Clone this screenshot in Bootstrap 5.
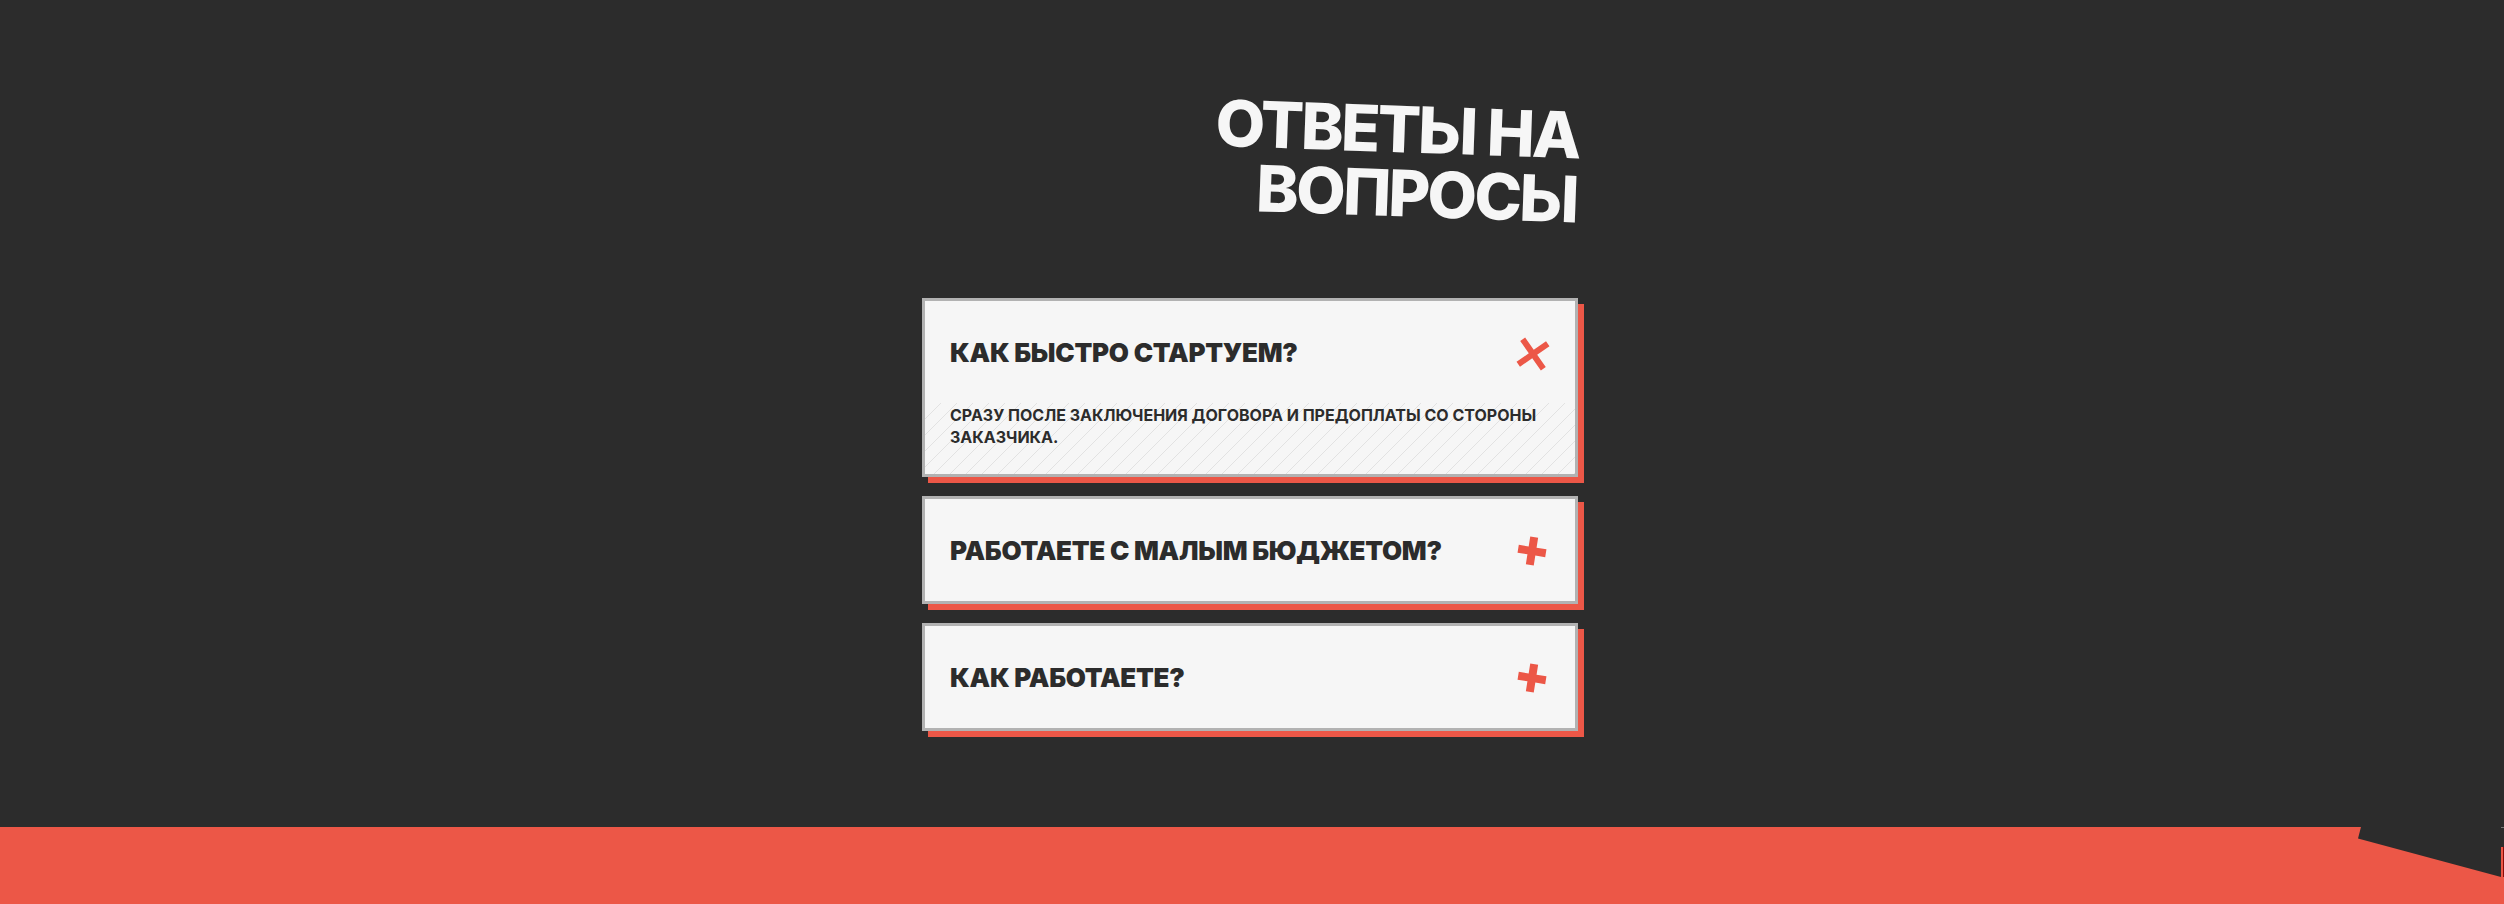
<!DOCTYPE html>
<html lang="ru">
<head>
<meta charset="utf-8">
<meta name="viewport" content="width=device-width, initial-scale=1">
<title>Ответы на вопросы</title>
<link href="https://cdn.jsdelivr.net/npm/bootstrap@5.3.0/dist/css/bootstrap.min.css" rel="stylesheet">
<style>
  :root { --ink: #2c2c2c; --paper: #f6f6f6; --accent: #ec5747; --line: #b2b2b2; }
  body { font-family: Inter, "Liberation Sans", sans-serif; color: var(--ink); background: var(--ink); }
  .faq { padding-top: 92px; padding-bottom: 96px; }
  .faq-wrap { max-width: 660px; }
  .faq-title { font-size: 64px; line-height: 64px; font-weight: 800; letter-spacing: -0.04em; color: var(--paper); transform: rotate(2deg); margin-bottom: 78px; }
  .faq-list { display: grid; gap: 19px; }
  .faq-list .faq-item { color: var(--ink); background: var(--paper); border: 3px solid var(--line); border-radius: 0; box-shadow: 6px 6px 0 var(--accent); }
  .faq-q { width: 100%; height: 102px; padding: 2px 23px 0 25px; border: 0; background: none; color: inherit; text-align: left; text-transform: uppercase; font-size: 26px; line-height: 32px; font-weight: 900; letter-spacing: -0.01em; }
  .faq-q svg { width: 40px; height: 40px; fill: var(--accent); }
  .faq-a { padding: 1px 25px 26px; font-size: 16px; line-height: 22px; font-weight: 700;
    background: linear-gradient(135deg, transparent 48%, #e2e2e2 48%, #e2e2e2 52%, transparent 52%) 0 0 / 16px 16px; }
  .next { height: 77px; background: var(--accent); }
  .next svg { width: 146px; height: 50px; }
</style>
</head>
<body class="text-uppercase overflow-hidden">
<main>
  <section class="faq">
    <div class="faq-wrap mx-auto pe-1">
      <h2 class="faq-title text-end">Ответы на вопросы</h2>
      <div class="faq-list accordion" id="faq">
        <div class="faq-item accordion-item">
          <h3 class="m-0"><button class="faq-q d-flex align-items-center justify-content-between" type="button" data-bs-toggle="collapse" data-bs-target="#a1" aria-expanded="true" aria-controls="a1">Как быстро стартуем?
            <svg viewBox="-20 -20 40 40" aria-hidden="true"><path transform="translate(1 1) rotate(55)" d="M-18-3h15v-15h6v15h15v6h-15v15h-6v-15h-15z"/></svg></button></h3>
          <div id="a1" class="collapse show" data-bs-parent="#faq"><p class="faq-a m-0">Сразу после заключения договора и предоплаты со стороны заказчика.</p></div>
        </div>
        <div class="faq-item accordion-item">
          <h3 class="m-0"><button class="faq-q d-flex align-items-center justify-content-between" type="button" aria-expanded="false">Работаете с малым бюджетом?
            <svg viewBox="-20 -20 40 40" aria-hidden="true"><path transform="rotate(9)" d="M-14-4h10v-10h8v10h10v8h-10v10h-8v-10h-10z"/></svg></button></h3>
        </div>
        <div class="faq-item accordion-item">
          <h3 class="m-0"><button class="faq-q d-flex align-items-center justify-content-between" type="button" aria-expanded="false">Как работаете?
            <svg viewBox="-20 -20 40 40" aria-hidden="true"><path transform="rotate(9)" d="M-14-4h10v-10h8v10h10v8h-10v10h-8v-10h-10z"/></svg></button></h3>
        </div>
      </div>
    </div>
  </section>
  <section class="next d-flex justify-content-end">
    <svg viewBox="0 0 146 50" aria-hidden="true"><path fill="#2c2c2c" d="M3 0H146V20H143V50L0 11.500z"/><path fill="#8a0a08" d="M145 20h1v30h-1z"/><path fill="#777" d="M143 0h3v1h-3z"/></svg>
  </section>
</main>
<script src="https://cdn.jsdelivr.net/npm/bootstrap@5.3.0/dist/js/bootstrap.bundle.min.js"></script>
</body>
</html>
